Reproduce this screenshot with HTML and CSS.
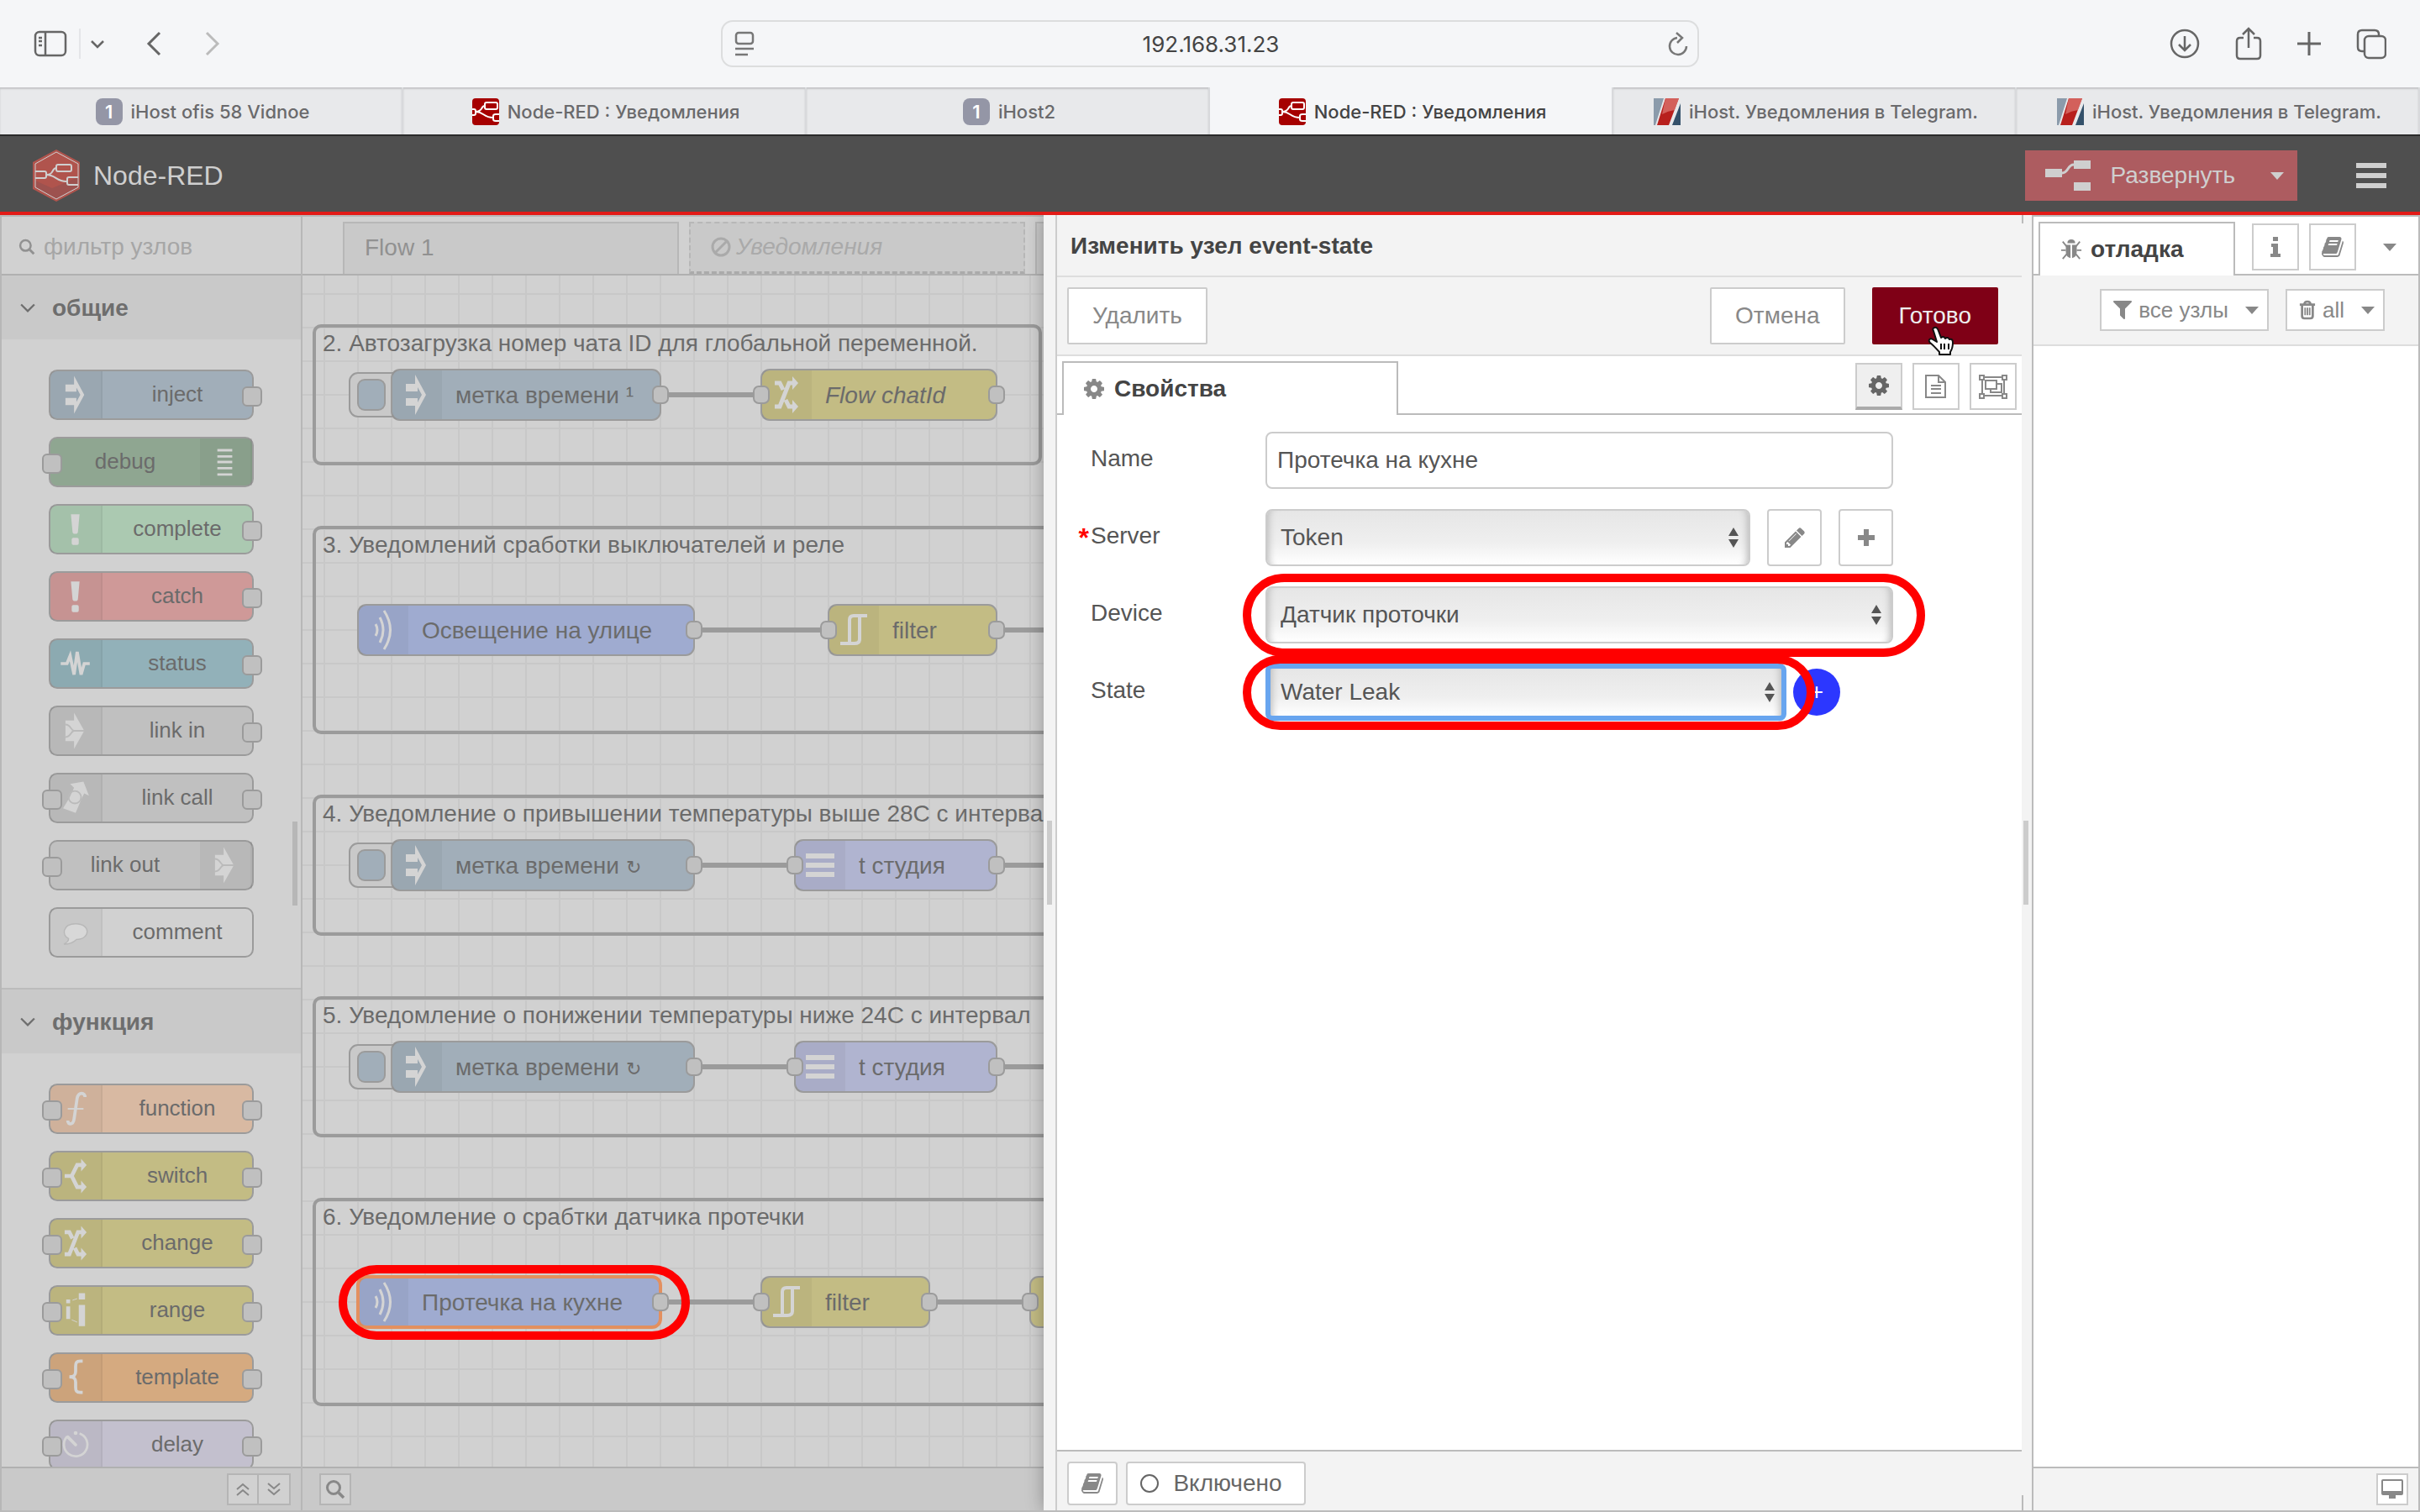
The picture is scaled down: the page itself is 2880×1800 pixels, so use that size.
FILE: index.html
```html
<!DOCTYPE html>
<html lang="ru">
<head>
  <meta charset="UTF-8">
  <meta name="viewport" content="width=device-width, initial-scale=1.0">
  <title>Node-RED : Уведомления</title>
  <link rel="stylesheet" href="styles.css">
</head>
<body>

  <!-- icons -->
  <svg class="sprite" width="0" height="0">
    <symbol id="inject" viewBox="0 0 60 60"><path fill="currentColor" d="M17 17h11V6l13 24-13 24V43H17V34h14v5l5-9-5-9v5H17z"/></symbol>
    <symbol id="debug" viewBox="0 0 60 60"><path stroke="currentColor" stroke-width="3" d="M20 15h19M20 23h19M20 30h19M20 38h19M20 46h19"/></symbol>
    <symbol id="alert" viewBox="0 0 60 60"><path fill="currentColor" d="M24 11h11l-2 22q0 3-3 3h-1q-3 0-3-3zM27 41h5q2 0 2 2v5q0 2-2 2h-5q-2 0-2-2v-5q0-2 2-2z"/></symbol>
    <symbol id="status" viewBox="0 0 60 60"><path fill="none" stroke="currentColor" stroke-width="4" d="M11 30h8l4-10 5 24 4-29 5 29 4-14h7"/></symbol>
    <symbol id="link" viewBox="0 0 60 60"><path fill="currentColor" d="M17 17h11V7l13 23-13 23V43H17z"/><path class="cut" d="M17 22c7 0 7 8 11 8-4 0-4 8-11 8M27 30h14"/></symbol>
    <symbol id="link-call" viewBox="0 0 60 60"><path fill="currentColor" d="M23 12l17-3 7 18-6-3-3 6-8 19-16-6 8-13 6-13z"/><circle class="cut" cx="29" cy="29" r="8"/></symbol>
    <symbol id="comment" viewBox="0 0 60 60"><path fill="#d8d8d8" stroke="#b8b8b8" stroke-width="1.500" d="M21 38c-9-4-8-19 9-19 20 0 19 20 1 20-3 3-9 6-16 6 4-2 6-4 6-7z"/></symbol>
    <symbol id="function" viewBox="0 0 60 60"><path fill="none" stroke="currentColor" stroke-width="4" d="M42 15c0-6-8-7-10 1l-4 27c-1 8-8 8-8 2"/><path stroke="currentColor" stroke-width="2" d="M20 30h20"/></symbol>
    <symbol id="switch" viewBox="0 0 60 60"><path fill="none" stroke="currentColor" stroke-width="5" d="M16 30h9l7-14h6M25 30l7 14h6"/><path fill="currentColor" d="M37 8l7 8-7 8zM37 36l7 8-7 8z"/></symbol>
    <symbol id="change" viewBox="0 0 60 60"><path fill="none" stroke="currentColor" stroke-width="5" d="M16 44h6l11-28h5M16 16h6l4 8M29 36l4 8h5"/><path fill="currentColor" d="M37 8l7 8-7 8zM37 36l7 8-7 8z"/></symbol>
    <symbol id="range" viewBox="0 0 60 60"><path fill="currentColor" d="M18 16h5v5h-5zM18 25h5v16h-5zM34 8h8v8h-8zM34 23h8v27h-8z"/><path stroke="currentColor" d="M26 17l6-2M25 42l7 3"/></symbol>
    <symbol id="template" viewBox="0 0 60 60"><path fill="none" stroke="currentColor" stroke-width="4" d="M39 9h-3c-5 0-6 2-6 7v6c0 5-2 7-8 7 6 0 8 2 8 7v6c0 5 1 7 6 7h3"/></symbol>
    <symbol id="delay" viewBox="0 0 60 60"><path fill="none" stroke="currentColor" stroke-width="3" d="M35 15.500a15 15 0 1 1-16 4"/><path stroke="currentColor" stroke-width="4" stroke-linecap="round" d="M20 20l10 10"/><circle cx="30" cy="15" r="2.500" fill="currentColor"/></symbol>
    <symbol id="event" viewBox="0 0 60 60"><path fill="none" stroke="currentColor" stroke-width="3" d="M21 23q4 7 0 14M26 15q8 15 0 30M31 7q15 23 0 46"/></symbol>
    <symbol id="rbe" viewBox="0 0 60 60"><path fill="none" stroke="currentColor" stroke-width="4" d="M46 13H30q-5 0-5 5v28M14 46h17q6 0 6-5V14"/></symbol>
    <symbol id="bars" viewBox="0 0 60 60"><path fill="currentColor" d="M13 16h34v6H13zM13 27h34v6H13zM13 38h34v6H13z"/></symbol>

    <symbol id="search" viewBox="0 0 24 24"><path fill="none" stroke="currentColor" stroke-width="3.500" d="M16 16l6 6"/><circle cx="10" cy="10" r="7.500" fill="none" stroke="currentColor" stroke-width="3"/></symbol>
    <symbol id="cog" viewBox="0 128 1536 1536"><path fill="currentColor" d="M1024 896q0-106-75-181t-181-75-181 75-75 181 75 181 181 75 181-75 75-181zm512-109v222q0 12-8 23t-20 13l-185 28q-19 54-39 91 35 50 107 138 10 12 10 25t-9 23q-27 37-99 108t-94 71q-12 0-26-9l-138-108q-44 23-91 38-16 136-29 186-7 28-36 28h-222q-14 0-24.500-8.500t-11.500-21.500l-28-184q-49-16-90-37l-141 107q-10 9-25 9-14 0-25-11-126-114-165-168-7-10-7-23 0-12 8-23 15-21 51-66.500t54-70.500q-27-50-41-99l-183-27q-13-2-21-12.500t-8-23.500v-222q0-12 8-23t19-13l186-28q14-46 39-92-40-57-107-138-10-12-10-24 0-10 9-23 26-36 98.500-107.500t94.500-71.500q13 0 26 10l138 107q44-23 91-38 16-136 29-186 7-28 36-28h222q14 0 24.500 8.500t11.500 21.500l28 184q49 16 90 37l142-107q9-9 24-9 13 0 25 10 129 119 165 170 7 8 7 22 0 12-8 23-15 21-51 66.500t-54 70.500q26 50 41 98l183 28q13 2 21 12.500t8 23.500z"/></symbol>
    <symbol id="book" viewBox="0 0 1792 1792"><path fill="currentColor" d="M1703 478q40 57 18 129l-275 906q-19 64-76.500 107.500t-122.500 43.500h-923q-77 0-148.500-53.500t-99.500-131.500q-24-67-2-127 0-4 3-27t4-37q1-8-3-21.500t-3-19.500q2-11 8-21t16.500-23.500 16.500-23.500q23-38 45-91.500t30-91.500q3-10 .5-30t-.5-28q3-11 17-28t17-23q21-36 42-92t25-90q1-9-2.500-32t.5-28q4-13 22-30.500t22-22.500q19-26 42.500-84.500t27.500-96.500q1-8-3-25.500t-2-26.500q2-8 9-18t18-23 17-21q8-12 16.500-30.500t15-35 16-36 19.500-32 26.500-23.500 36-11.500 47.500 5.500l-1 3q38-9 51-9h761q74 0 114 56t18 130l-274 906q-36 119-71.500 153.500t-128.500 34.500h-869q-27 0-38 15-11 16-1 43 24 70 144 70h923q29 0 56-15.500t35-41.500l300-987q7-22 5-57 38 15 59 43zm-1064 2q-4 13 2 22.500t20 9.500h608q13 0 25.500-9.500t16.500-22.500l21-64q4-13-2-22.500t-20-9.500h-608q-13 0-25.500 9.500t-16.500 22.500zm-83 256q-4 13 2 22.500t20 9.500h608q13 0 25.500-9.500t16.500-22.500l21-64q4-13-2-22.500t-20-9.500h-608q-13 0-25.500 9.500t-16.500 22.500z"/></symbol>
    <symbol id="caret" viewBox="0 0 16 16"><path fill="currentColor" d="M0 4h16l-8 9z"/></symbol>
    <symbol id="updown" viewBox="0 0 12 24"><path fill="currentColor" d="M6 0l6 10H0zM6 24l6-10H0z"/></symbol>
    <symbol id="chevron" viewBox="0 0 16 16"><path fill="none" stroke="currentColor" stroke-width="2" d="M1 4l7 7 7-7"/></symbol>
    <symbol id="nr" viewBox="0 0 32 32"><rect width="32" height="32" rx="4" fill="#a60000"/><g fill="none" stroke="#fff" stroke-width="2"><rect x="15" y="5" width="15" height="8" rx="2"/><path d="M0 13h2q2 0 2 2v3q0 2-2 2H0M4 16c9 0 6-7 11-7M4 16c10 0 9 7 21 7M32 19h-4q-3 0-3 2v4q0 2 3 2h4"/></g></symbol>
    <symbol id="telegram-doc" viewBox="0 0 32 32"><path fill="#8b9bab" d="M0 0h12L2 32H0z"/><path fill="#34516a" d="M32 6v26H22z"/><path fill="#b8201d" d="M14 0h16L18 32H4z"/><path fill="#d9706c" d="M14 0h16l-5 14q-8 1-15 5z" opacity=".8"/></symbol>
  </svg>

  <div class="app">
    <div class="browser-bar">
      <div class="nav-buttons">
        <button class="bar-button sidebar-toggle" aria-label="Боковая панель"><svg width="40" height="32" viewBox="0 0 40 32" fill="none" stroke="currentColor" stroke-width="2.500"><rect x="2" y="2" width="36" height="28" rx="5"/><path d="M14 2v28M6 9h4M6 13h4M6 18h4"/></svg></button>
        <span class="bar-line"></span>
        <button class="bar-button group-toggle" aria-label="Группы"><svg width="16" height="12" viewBox="0 0 16 12" fill="none" stroke="currentColor" stroke-width="2.500"><path d="M1 3l7 7 7-7"/></svg></button>
        <button class="bar-button back" aria-label="Назад"><svg width="18" height="30" viewBox="0 0 18 30" fill="none" stroke="currentColor" stroke-width="3"><path d="M16 2L3 15l13 13"/></svg></button>
        <button class="bar-button forward" aria-label="Вперёд" disabled><svg width="18" height="30" viewBox="0 0 18 30" fill="none" stroke="currentColor" stroke-width="3"><path d="M2 2l13 13L2 28"/></svg></button>
      </div>
      <div class="address">
        <svg width="24" height="30" viewBox="0 0 24 30" fill="none" stroke="currentColor" stroke-width="2.500"><rect x="2" y="2" width="20" height="13" rx="3"/><path d="M1 21h22M1 28h15"/></svg>
        <input type="text" value="192.168.31.23" aria-label="Адрес">
        <svg width="26" height="30" viewBox="0 0 26 30" fill="none" stroke="currentColor" stroke-width="2.500"><path d="M12 8a10 10 0 1 0 11 10M11 2l7 6-6 6"/></svg>
      </div>
      <div class="bar-actions">
        <button class="bar-button" aria-label="Загрузки"><svg width="36" height="40" viewBox="0 0 36 40" fill="none" stroke="currentColor" stroke-width="2.500"><circle cx="18" cy="20" r="16"/><path d="M18 11v17M11 21l7 7 7-7"/></svg></button>
        <button class="bar-button" aria-label="Поделиться"><svg width="32" height="40" viewBox="0 0 32 40" fill="none" stroke="currentColor" stroke-width="2.500"><path d="M10 13H6q-4 0-4 4v17q0 4 4 4h20q4 0 4-4V17q0-4-4-4h-4M16 25V3M9 9l7-7 7 7"/></svg></button>
        <button class="bar-button" aria-label="Новая вкладка"><svg width="28" height="40" viewBox="0 0 28 40" fill="none" stroke="currentColor" stroke-width="3"><path d="M14 6v28M0 20h28"/></svg></button>
        <button class="bar-button" aria-label="Все вкладки"><svg width="36" height="40" viewBox="0 0 36 40" fill="none" stroke="currentColor" stroke-width="2.500"><rect x="10" y="11" width="25" height="26" rx="5"/><path d="M9 29H7q-5 0-5-5V9q0-5 5-5h15q5 0 5 5v1"/></svg></button>
      </div>
    </div>

    <nav class="browser-tabs">
      <a class="browser-tab" href="#"><span class="badge">1</span>iHost ofis 58 Vidnoe</a>
      <a class="browser-tab" href="#"><svg class="favicon"><use href="#nr"/></svg>Node-RED : Уведомления</a>
      <a class="browser-tab" href="#"><span class="badge">1</span>iHost2</a>
      <a class="browser-tab active" href="#"><svg class="favicon"><use href="#nr"/></svg>Node-RED : Уведомления</a>
      <a class="browser-tab" href="#"><svg class="favicon"><use href="#telegram-doc"/></svg>iHost. Уведомления в Telegram.</a>
      <a class="browser-tab" href="#"><svg class="favicon"><use href="#telegram-doc"/></svg>iHost. Уведомления в Telegram.</a>
    </nav>

    <header class="header">
      <div class="logo">
        <svg width="56" height="62" viewBox="0 0 56 62"><path fill="#b0544d" d="M28 0l28 15v32L28 62 0 47V15z"/><path fill="#9d524f" d="M3 37l20 9 31-13v13L28 59 3 45z"/><path fill="none" stroke="#cfcfcf" d="M28 3l26 14v28L28 59 3 45V17z"/><g fill="none" stroke="#cfcfcf" stroke-width="2"><rect x="28" y="18" width="18" height="8" rx="2"/><path d="M3 26h11q2 0 2 2v4q0 2-2 2H3M16 30c10 0 6-8 12-8M16 30c11 0 12 8 24 8M54 33H43q-2 0-2 2v5q0 2 2 2h11"/></g></svg>
        <span>Node-RED</span>
      </div>
      <div class="header-actions">
        <button class="deploy">
          <svg width="56" height="36" viewBox="0 0 56 36"><path fill="currentColor" d="M0 10h20v10H0zM34 0h20v10H34zM34 26h20v10H34z"/><path fill="none" stroke="currentColor" stroke-width="3" d="M20 15c8 0 6-10 14-10"/></svg>
          Развернуть
          <svg class="caret"><use href="#caret"/></svg>
        </button>
        <button class="main-menu" aria-label="Меню"><svg width="36" height="30" viewBox="0 0 36 30"><path stroke="currentColor" stroke-width="6" d="M0 3h36M0 15h36M0 27h36"/></svg></button>
      </div>
    </header>

    <main class="main">
      <aside class="palette">
        <label class="palette-search">
          <svg class="search-icon"><use href="#search"/></svg>
          <input type="text" placeholder="фильтр узлов">
        </label>
        <div class="palette-list">
          <h3 class="category"><svg><use href="#chevron"/></svg>общие</h3>
          <div class="category-nodes">
            <div class="node out inject"><svg><use href="#inject"/></svg><span>inject</span></div>
            <div class="node in right debug"><svg><use href="#debug"/></svg><span>debug</span></div>
            <div class="node out complete"><svg><use href="#alert"/></svg><span>complete</span></div>
            <div class="node out catch"><svg><use href="#alert"/></svg><span>catch</span></div>
            <div class="node out status"><svg><use href="#status"/></svg><span>status</span></div>
            <div class="node out link"><svg><use href="#link"/></svg><span>link in</span></div>
            <div class="node in out link"><svg><use href="#link-call"/></svg><span>link call</span></div>
            <div class="node in right link"><svg><use href="#link"/></svg><span>link out</span></div>
            <div class="node comment"><svg><use href="#comment"/></svg><span>comment</span></div>
          </div>
          <h3 class="category"><svg><use href="#chevron"/></svg>функция</h3>
          <div class="category-nodes">
            <div class="node in out function"><svg><use href="#function"/></svg><span>function</span></div>
            <div class="node in out switch"><svg><use href="#switch"/></svg><span>switch</span></div>
            <div class="node in out switch"><svg><use href="#change"/></svg><span>change</span></div>
            <div class="node in out switch"><svg><use href="#range"/></svg><span>range</span></div>
            <div class="node in out template"><svg><use href="#template"/></svg><span>template</span></div>
            <div class="node in out delay"><svg><use href="#delay"/></svg><span>delay</span></div>
          </div>
          <span class="palette-grip"></span>
        </div>
        <div class="footer palette-footer">
          <button aria-label="Свернуть все"><svg width="18" height="18" viewBox="0 0 18 18" fill="none" stroke="currentColor" stroke-width="2"><path d="M2 9l7-6 7 6M2 16l7-6 7 6"/></svg></button>
          <button aria-label="Развернуть все"><svg width="18" height="18" viewBox="0 0 18 18" fill="none" stroke="currentColor" stroke-width="2"><path d="M2 2l7 6 7-6M2 9l7 6 7-6"/></svg></button>
        </div>
      </aside>

      <section class="workspace">
        <div class="flow-tabs">
          <a class="flow-tab" href="#">Flow 1</a>
          <a class="flow-tab disabled" href="#"><svg width="24" height="24" viewBox="0 0 24 24" fill="none" stroke="currentColor" stroke-width="3"><circle cx="12" cy="12" r="10"/><path d="M19 5L5 19"/></svg>Уведомления</a>
          <a class="flow-tab" href="#" aria-label="Flow"></a>
        </div>
        <svg class="canvas">
          <defs>
            <pattern id="grid" x="385" y="349" width="40" height="40" patternUnits="userSpaceOnUse"><path class="grid-line" d="M1 0v40M0 1h40"/></pattern>
          </defs>
          <!-- scrolled position of the flow -->
          <g transform="translate(-360 -328)">
            <rect x="360" y="328" width="4000" height="4000" fill="url(#grid)"/>

            <rect class="group" x="374" y="388" width="864" height="164" rx="8"/>
            <text class="group-label" x="384" y="418">2. Автозагрузка номер чата ID для глобальной переменной.</text>
            <path class="wire" d="M786 470h120"/>
            <rect class="button" x="416" y="444" width="80" height="52" rx="10"/>
            <rect class="shape inject" x="426" y="452" width="32" height="36" rx="8"/>
            <rect class="shape inject" x="466" y="440" width="320" height="60" rx="10"/>
            <path class="strip" d="M467 441h59v58h-59z"/>
            <use class="icon" href="#inject" x="466" y="440" width="60" height="60"/>
            <text x="542" y="480">метка времени ¹</text>
            <rect class="port" x="777" y="460" width="18" height="20" rx="6"/>
            <rect class="shape switch" x="906" y="440" width="280" height="60" rx="10"/>
            <path class="strip" d="M907 441h59v58h-59z"/>
            <use class="icon" href="#change" x="906" y="440" width="60" height="60"/>
            <text class="italic" x="982" y="480">Flow chatId</text>
            <rect class="port" x="897" y="460" width="18" height="20" rx="6"/>
            <rect class="port" x="1177" y="460" width="18" height="20" rx="6"/>

            <rect class="group" x="374" y="628" width="1400" height="244" rx="8"/>
            <text class="group-label" x="384" y="658">3. Уведомлений сработки выключателей и реле</text>
            <path class="wire" d="M826 750h160M1186 750h200"/>
            <rect class="shape event" x="426" y="720" width="400" height="60" rx="10"/>
            <path class="strip" d="M427 721h59v58h-59z"/>
            <use class="icon" href="#event" x="426" y="720" width="60" height="60"/>
            <text x="502" y="760">Освещение на улице</text>
            <rect class="port" x="817" y="740" width="18" height="20" rx="6"/>
            <rect class="shape switch" x="986" y="720" width="200" height="60" rx="10"/>
            <path class="strip" d="M987 721h59v58h-59z"/>
            <use class="icon" href="#rbe" x="986" y="720" width="60" height="60"/>
            <text x="1062" y="760">filter</text>
            <rect class="port" x="977" y="740" width="18" height="20" rx="6"/>
            <rect class="port" x="1177" y="740" width="18" height="20" rx="6"/>

            <rect class="group" x="374" y="948" width="1400" height="164" rx="8"/>
            <text class="group-label" x="384" y="978">4. Уведомление о привышении температуры выше 28С с интерва</text>
            <path class="wire" d="M826 1030h120M1186 1030h200"/>
            <rect class="button" x="416" y="1004" width="80" height="52" rx="10"/>
            <rect class="shape inject" x="426" y="1012" width="32" height="36" rx="8"/>
            <rect class="shape inject" x="466" y="1000" width="360" height="60" rx="10"/>
            <path class="strip" d="M467 1001h59v58h-59z"/>
            <use class="icon" href="#inject" x="466" y="1000" width="60" height="60"/>
            <text x="542" y="1040">метка времени <tspan class="repeat">↻</tspan></text>
            <rect class="port" x="817" y="1020" width="18" height="20" rx="6"/>
            <rect class="shape value" x="946" y="1000" width="240" height="60" rx="10"/>
            <path class="strip" d="M947 1001h59v58h-59z"/>
            <use class="icon" href="#bars" x="946" y="1000" width="60" height="60"/>
            <text x="1022" y="1040">t студия</text>
            <rect class="port" x="937" y="1020" width="18" height="20" rx="6"/>
            <rect class="port" x="1177" y="1020" width="18" height="20" rx="6"/>

            <rect class="group" x="374" y="1188" width="1400" height="164" rx="8"/>
            <text class="group-label" x="384" y="1218">5. Уведомление о понижении температуры ниже 24С с интервал</text>
            <path class="wire" d="M826 1270h120M1186 1270h200"/>
            <rect class="button" x="416" y="1244" width="80" height="52" rx="10"/>
            <rect class="shape inject" x="426" y="1252" width="32" height="36" rx="8"/>
            <rect class="shape inject" x="466" y="1240" width="360" height="60" rx="10"/>
            <path class="strip" d="M467 1241h59v58h-59z"/>
            <use class="icon" href="#inject" x="466" y="1240" width="60" height="60"/>
            <text x="542" y="1280">метка времени <tspan class="repeat">↻</tspan></text>
            <rect class="port" x="817" y="1260" width="18" height="20" rx="6"/>
            <rect class="shape value" x="946" y="1240" width="240" height="60" rx="10"/>
            <path class="strip" d="M947 1241h59v58h-59z"/>
            <use class="icon" href="#bars" x="946" y="1240" width="60" height="60"/>
            <text x="1022" y="1280">t студия</text>
            <rect class="port" x="937" y="1260" width="18" height="20" rx="6"/>
            <rect class="port" x="1177" y="1260" width="18" height="20" rx="6"/>

            <rect class="group" x="374" y="1428" width="1400" height="244" rx="8"/>
            <text class="group-label" x="384" y="1458">6. Уведомление о срабтки датчика протечки</text>
            <path class="wire" d="M786 1550h120M1106 1550h120"/>
            <rect class="shape event selected" x="426" y="1520" width="360" height="60" rx="10"/>
            <path class="strip" d="M428 1522h58v56h-58z"/>
            <use class="icon" href="#event" x="426" y="1520" width="60" height="60"/>
            <text x="502" y="1560">Протечка на кухне</text>
            <rect class="port" x="777" y="1540" width="18" height="20" rx="6"/>
            <rect class="shape switch" x="906" y="1520" width="200" height="60" rx="10"/>
            <path class="strip" d="M907 1521h59v58h-59z"/>
            <use class="icon" href="#rbe" x="906" y="1520" width="60" height="60"/>
            <text x="982" y="1560">filter</text>
            <rect class="port" x="897" y="1540" width="18" height="20" rx="6"/>
            <rect class="port" x="1097" y="1540" width="18" height="20" rx="6"/>
            <rect class="shape switch" x="1226" y="1520" width="200" height="60" rx="10"/>
            <rect class="port" x="1217" y="1540" width="18" height="20" rx="6"/>
            <rect class="highlight" x="408" y="1511" width="408" height="79" rx="40"/>
          </g>
        </svg>
        <div class="footer workspace-footer">
          <button aria-label="Поиск"><svg width="24" height="24"><use href="#search"/></svg></button>
        </div>
      </section>

      <section class="tray">
        <div class="tray-handle"><span class="grip"></span></div>
        <form class="tray-panel">
          <h2 class="tray-title">Изменить узел event-state</h2>
          <div class="tray-toolbar">
            <button type="button" class="btn">Удалить</button>
            <button type="button" class="btn cancel">Отмена</button>
            <button type="button" class="btn primary">Готово
              <svg class="cursor" width="32" height="36" viewBox="0 0 32 36"><path fill="#fff" stroke="#111" stroke-width="2" stroke-linejoin="round" d="M8 2c3-1 4 1 5 4l3 8c2-2 4-1 5 1 2-2 4-1 5 1 3-1 4 1 4 4 0 6-1 8-3 11v3H14v-3c-4-4-7-8-11-11-3-3 0-6 3-4l5 3L7 6c-1-2-1-3 1-4z"/><path stroke="#111" stroke-width="2" d="M16 21v7M20 21v7M25 21v7"/></svg>
            </button>
          </div>
          <div class="tray-tabs">
            <a class="tray-tab" href="#"><svg width="24" height="24"><use href="#cog"/></svg>Свойства</a>
            <div class="tab-buttons">
              <button type="button" class="selected" aria-label="Свойства"><svg width="24" height="24"><use href="#cog"/></svg></button>
              <button type="button" aria-label="Описание"><svg width="26" height="28" viewBox="0 0 26 28" fill="none" stroke="currentColor" stroke-width="2"><path d="M1 1h15l8 8v18H1zM16 1v8h8M7 13h12M7 17h12M7 22h12"/></svg></button>
              <button type="button" aria-label="Внешний вид"><svg width="34" height="30" viewBox="0 0 34 30" fill="none" stroke="currentColor" stroke-width="2"><path d="M4 4h26v22H4z"/><path d="M8 8h13v10H8zM21 12h6v10H14v-4"/><g fill="#fff"><path d="M1 2h5v5H1zM28 2h5v5h-5zM1 24h5v5H1zM28 24h5v5h-5z"/></g></svg></button>
            </div>
          </div>
          <div class="tray-body">
            <div class="row">
              <label for="name">Name</label>
              <input type="text" id="name" value="Протечка на кухне">
            </div>
            <div class="row">
              <label for="server" class="required">Server</label>
              <div class="select"><select id="server"><option>Token</option></select><svg><use href="#updown"/></svg></div>
              <button type="button" class="square" aria-label="Изменить"><svg width="28" height="28" viewBox="0 0 1792 1792"><path fill="currentColor" d="M491 1536l91-91-235-235-91 91v107h128v128h107zm523-928q0-22-22-22-10 0-17 7l-542 542q-7 7-7 17 0 22 22 22 10 0 17-7l542-542q7-7 7-17zm-54-192l416 416-832 832h-416v-416zm683 96q0 53-37 90l-166 166-416-416 166-165q36-38 90-38 53 0 91 38l235 234q37 39 37 91z"/></svg></button>
              <button type="button" class="square" aria-label="Добавить"><svg width="22" height="22" viewBox="0 0 22 22"><path stroke="currentColor" stroke-width="6" d="M11 1v20M1 11h20"/></svg></button>
            </div>
            <div class="row">
              <label for="device">Device</label>
              <div class="select marked device"><select id="device"><option>Датчик проточки</option></select><svg><use href="#updown"/></svg></div>
            </div>
            <div class="row state-row">
              <label for="state">State</label>
              <div class="select marked state"><select id="state"><option>Water Leak</option></select><svg><use href="#updown"/></svg></div>
              <button type="button" class="add-state">+</button>
            </div>
          </div>
          <div class="tray-footer">
            <button type="button" aria-label="Справка"><svg width="28" height="28"><use href="#book"/></svg></button>
            <button type="button" class="enabled"><svg width="24" height="24" viewBox="0 0 24 24"><circle cx="12" cy="12" r="10" fill="none" stroke="currentColor" stroke-width="2"/></svg>Включено</button>
          </div>
        </form>
      </section>

      <div class="separator"><span class="grip"></span></div>

      <aside class="sidebar">
        <div class="sidebar-tabs">
          <a class="sidebar-tab" href="#"><svg width="26" height="26" viewBox="0 0 28 28"><path fill="currentColor" d="M9 6q0-5 5-5t5 5zM7 8h6v17q-6-1-6-8zM15 8h6v9q0 7-6 8z"/><path fill="none" stroke="currentColor" stroke-width="2" d="M3 4l5 6M25 4l-5 6M1 15h6M27 15h-6M3 26l5-6M25 26l-5-6"/></svg>отладка</a>
          <div class="tab-buttons">
            <button aria-label="Информация"><svg width="12" height="24" viewBox="0 0 12 24"><path fill="currentColor" d="M3 0h6v5H3zM1 8h8v12h3v4H0v-4h3v-8H1z"/></svg></button>
            <button aria-label="Справка"><svg width="28" height="28"><use href="#book"/></svg></button>
            <button class="plain" aria-label="Ещё"><svg class="caret"><use href="#caret"/></svg></button>
          </div>
        </div>
        <div class="sidebar-toolbar">
          <button><svg width="22" height="22" viewBox="192 256 1408 1408"><path fill="currentColor" d="M1595 295q17 41-14 70l-493 493v742q0 42-39 59-13 5-25 5-27 0-45-19l-256-256q-19-19-19-45v-486l-493-493q-31-29-14-70 17-39 59-39h1280q42 0 59 39z"/></svg>все узлы<svg class="caret"><use href="#caret"/></svg></button>
          <button><svg width="20" height="24" viewBox="0 0 22 24" fill="none" stroke="currentColor" stroke-width="2"><path stroke-width="3" d="M1 5h20M7 5q0-4 4-4t4 4M4 6v14q0 3 3 3h8q3 0 3-3V6"/><path d="M8 9v10M11 9v10M14 9v10"/></svg>all<svg class="caret"><use href="#caret"/></svg></button>
        </div>
        <div class="sidebar-content"></div>
        <div class="footer sidebar-footer">
          <button aria-label="Открыть в окне"><svg width="26" height="24" viewBox="0 0 26 24"><path fill="currentColor" fill-rule="evenodd" d="M2 0h22q2 0 2 2v15q0 2-2 2h-7v4H9v-4H2q-2 0-2-2V2q0-2 2-2zM2 2v12h22V2z"/></svg></button>
        </div>
      </aside>
    </main>
  </div>

</body>
</html>
```
FILE: styles.css
```css
* {
  box-sizing: border-box;
}

body {
  margin: 0;
  font-family: "Helvetica Neue", "Liberation Sans", Arial, sans-serif;
  font-size: 28px;
  color: #555;
}

a {
  color: inherit;
  text-decoration: none;
}

button, input, select {
  font: inherit;
  color: inherit;
}

button {
  display: flex;
  align-items: center;
  justify-content: center;
  padding: 0;
  border: 2px solid #ccc;
  background: #fff;
  color: #888;
  cursor: pointer;
}

svg {
  flex: none;
  display: block;
}

.sprite {
  position: absolute;
}

.app {
  display: flex;
  flex-direction: column;
  height: 100vh;
  overflow: hidden;
}

.caret {
  width: 16px;
  height: 16px;
}

/* browser */
.browser-bar {
  flex: none;
  display: grid;
  grid-template-columns: 1fr minmax(600px, 1164px) 1fr;
  align-items: center;
  height: 104px;
  padding: 0 40px;
  background: #f5f6f8;
  color: #666;
  font-family: Inter, sans-serif;
}

.nav-buttons, .bar-actions {
  display: flex;
  align-items: center;
}

.bar-actions {
  justify-content: flex-end;
  gap: 42px;
}

.bar-button {
  border: none;
  background: none;
  color: #666;
}

.bar-line {
  width: 2px;
  height: 36px;
  margin: 0 12px 0 14px;
  background: #e4e5e8;
}

.back {
  margin-left: 50px;
}

.forward {
  margin-left: 52px;
  color: #bbb;
}

.address {
  display: flex;
  align-items: center;
  height: 56px;
  padding: 0 10px 0 14px;
  border: 2px solid #dcddde;
  border-radius: 14px;
  color: #777;
}

.address input {
  flex: 1;
  min-width: 0;
  border: none;
  background: none;
  text-align: center;
  font-size: 26px;
  color: #444;
}

.browser-tabs {
  flex: none;
  display: flex;
  height: 56px;
  background: #f5f6f8;
  font-family: Inter, sans-serif;
  font-size: 22px;
  font-weight: 500;
}

.browser-tab {
  flex: 1;
  display: flex;
  align-items: center;
  justify-content: center;
  gap: 10px;
  padding: 2px 0 0 4px;
  border-right: 2px solid #d8d9dc;
  background: #e8e9eb;
  box-shadow: inset 0 2px 2px #c4c5c8;
  color: #6a6a6c;
  white-space: nowrap;
}

.browser-tab.active {
  background: none;
  box-shadow: none;
  color: #444;
}

.favicon, .badge {
  width: 32px;
  height: 32px;
}

.badge {
  border-radius: 8px;
  background: #9496a6;
  color: #fff;
  text-align: center;
  line-height: 32px;
  font-weight: 600;
}

/* header */
.header {
  flex: none;
  display: flex;
  align-items: center;
  justify-content: space-between;
  height: 96px;
  padding: 4px 40px 0 39px;
  border-top: 2px solid #2b2b2b;
  border-bottom: 4px solid #e21b17;
  background: #4f4f4f;
  color: #cfcfcf;
}

.logo {
  display: flex;
  align-items: center;
  gap: 16px;
  font-size: 32px;
}

.header-actions {
  display: flex;
  align-items: center;
  gap: 70px;
}

.deploy {
  gap: 22px;
  height: 60px;
  padding: 0 16px 0 24px;
  border: none;
  background: #ad5c60;
  color: #cfcfcf;
}

.deploy .caret {
  margin-left: 20px;
}

.main-menu {
  border: none;
  background: none;
  color: #cfcfcf;
}

.main {
  flex: 1;
  display: flex;
  min-height: 0;
  border-bottom: 2px solid #bbb;
  background: #f3f3f3;
}

/* palette */
.palette {
  flex: none;
  display: flex;
  flex-direction: column;
  width: 360px;
  border: 2px solid #b7b7b7;
  border-bottom: none;
  background: #d1d1d1;
  color: #6e6e6e;
}

.palette-search {
  flex: none;
  display: flex;
  align-items: center;
  gap: 10px;
  height: 70px;
  padding: 4px 20px 0;
  border-bottom: 2px solid #b0b0b0;
  color: #919191;
}

.search-icon {
  width: 20px;
  height: 20px;
}

.palette-search input {
  min-width: 0;
  padding: 0;
  border: none;
  background: none;
}

.palette-search input::placeholder {
  color: #a6a6a6;
}

.palette-list {
  position: relative;
  flex: 1;
  overflow: hidden;
}

.palette-grip {
  position: absolute;
  right: 4px;
  top: 650px;
  width: 6px;
  height: 100px;
  background: #b7b7b7;
}

.category {
  display: flex;
  align-items: center;
  gap: 20px;
  height: 76px;
  margin: 0;
  padding: 2px 22px 0;
  background: #c9c9c9;
  font-size: 28px;
}

.category svg {
  width: 18px;
  height: 18px;
}

.category-nodes {
  display: flex;
  flex-direction: column;
  gap: 20px;
  padding: 36px 56px;
}

.category-nodes:not(:last-of-type) {
  border-bottom: 2px solid #bbb;
}

.node {
  position: relative;
  display: flex;
  height: 60px;
  border: 2px solid #9b9b9b;
  border-radius: 10px;
  color: #d4d4d4;
  font-size: 26px;
}

.node svg {
  width: 62px;
  height: 56px;
  background: rgba(0, 0, 0, 0.04);
  border-right: 2px solid rgba(0, 0, 0, 0.04);
}

.node span {
  flex: 1;
  line-height: 54px;
  text-align: center;
  color: #6b6b6b;
}

.node.right {
  flex-direction: row-reverse;
}

/* ports */
.node.in::before, .node.out::after {
  content: "";
  position: absolute;
  top: 18px;
  width: 20px;
  height: 20px;
  border: 2px solid #9b9b9b;
  border-radius: 6px;
  background: #c0c0c0;
}

.node.in::before {
  left: -10px;
}

.node.out::after {
  right: -12px;
}

.cut {
  fill: none;
  stroke: #bababa;
  stroke-width: 2px;
}

.inject { background: #a1aeb9; fill: #a1aeb9; }
.debug { background: #8fa691; }
.complete { background: #abc9b1; }
.catch { background: #cf9998; }
.status { background: #92b1b9; }
.link { background: #c0c0c0; }
.comment { background: #d1d1d1; }
.function { background: #d8b9a2; }
.switch { background: #c3bc84; fill: #c3bc84; }
.template { background: #d5aa80; }
.delay { background: #c3c0ce; }
.event { fill: #9fabd0; }
.value { fill: #b0b4d0; }

.footer {
  flex: none;
  display: flex;
  align-items: center;
  height: 52px;
  border-top: 2px solid #b0b0b0;
  background: #c9c9c9;
}

.footer button {
  width: 38px;
  height: 38px;
  border-color: #b5b5b5;
  background: #d1d1d1;
}

.palette-footer {
  justify-content: flex-end;
  padding-right: 12px;
}

.palette-footer button + button {
  margin-left: -2px;
  width: 40px;
}

/* workspace */
.workspace {
  flex: 1;
  display: flex;
  flex-direction: column;
  min-width: 0;
  overflow: hidden;
  border-top: 2px solid #b7b7b7;
  background: #d1d1d1;
}

.flow-tabs {
  flex: none;
  display: flex;
  align-items: flex-end;
  gap: 12px;
  height: 70px;
  padding-left: 48px;
  border-bottom: 2px solid #b0b0b0;
}

.flow-tab {
  flex: none;
  display: flex;
  align-items: center;
  gap: 6px;
  width: 400px;
  height: 62px;
  padding: 0 24px 2px;
  border: 2px solid #b7b7b7;
  border-bottom: none;
  background: #c9c9c9;
  color: #919191;
}

.flow-tab.disabled {
  border-style: dashed;
  color: #aaa;
  font-style: italic;
}

.canvas {
  flex: 1;
  width: 100%;
  min-height: 0;
}

.canvas text {
  font-size: 28px;
  fill: #6b6b6b;
}

.canvas .italic {
  font-style: italic;
}

.repeat {
  font-size: 22px;
}

.grid-line {
  stroke: #c8c8c8;
  stroke-width: 2px;
}

.group {
  fill: none;
  stroke: #9b9b9b;
  stroke-width: 4px;
}

.wire {
  fill: none;
  stroke: #9b9b9b;
  stroke-width: 6px;
}

.shape, .port, .button {
  stroke: #9b9b9b;
  stroke-width: 2px;
}

.button {
  fill: #c9c9c9;
}

.port {
  fill: #c0c0c0;
}

.shape.selected {
  stroke: #e3905f;
  stroke-width: 4px;
}

.strip {
  fill: rgba(0, 0, 0, 0.04);
}

.icon {
  color: #d4d4d4;
}

.highlight {
  fill: none;
  stroke: #f00;
  stroke-width: 10px;
}

.workspace-footer {
  padding-left: 20px;
}

/* edit tray */
.tray {
  flex: none;
  display: flex;
  width: 1164px;
  z-index: 1;
  box-shadow: 0 0 20px rgba(0, 0, 0, 0.3);
  clip-path: inset(0 0 0 -30px);
}

.tray-handle {
  display: flex;
  align-items: center;
  justify-content: center;
  width: 14px;
  background: #f3f3f3;
}

.grip {
  width: 6px;
  height: 100px;
  background: #ccc;
}

.tray-panel {
  flex: 1;
  display: flex;
  flex-direction: column;
  border-left: 2px solid #ccc;
  background: #fff;
}

.tray-title {
  flex: none;
  height: 74px;
  margin: 0;
  padding: 0 16px;
  border-bottom: 2px solid #ddd;
  background: #f3f3f3;
  font-size: 28px;
  line-height: 74px;
  color: #444;
}

.tray-toolbar {
  flex: none;
  display: flex;
  align-items: center;
  gap: 32px;
  height: 94px;
  padding: 0 28px 0 12px;
  border-bottom: 2px solid #ddd;
  background: #f3f3f3;
}

.btn {
  position: relative;
  height: 68px;
  padding: 0 28px;
  border-radius: 2px;
}

.cancel {
  margin-left: auto;
}

.btn.primary {
  padding: 0 30px;
  border-color: #7f0016;
  background: #7f0016;
  color: #eee;
}

.cursor {
  position: absolute;
  left: 64px;
  top: 44px;
}

.tray-tabs, .sidebar-tabs {
  flex: none;
  display: flex;
  align-items: flex-end;
  justify-content: space-between;
  height: 70px;
  padding: 0 6px;
  border-bottom: 2px solid #bbb;
}

.tray-tab, .sidebar-tab {
  display: flex;
  align-items: center;
  gap: 12px;
  width: 400px;
  height: 64px;
  margin-bottom: -2px;
  padding: 0 24px;
  border: 2px solid #bbb;
  border-bottom: none;
  background: #fff;
  font-weight: bold;
  color: #444;
}

.tray-tab svg, .sidebar-tab svg {
  color: #888;
}

.tab-buttons {
  display: flex;
  gap: 12px;
  margin-bottom: 4px;
}

.tab-buttons button {
  width: 56px;
  height: 56px;
}

.tab-buttons .selected {
  border-bottom: 4px solid #aaa;
  background: #efefef;
  color: #666;
}

.tab-buttons .plain {
  border-color: transparent;
  background: none;
}

.tray-body {
  flex: 1;
  display: flex;
  flex-direction: column;
  gap: 24px;
  padding: 20px 153px 20px 40px;
}

.row {
  display: flex;
  align-items: center;
  height: 68px;
}

.row label {
  position: relative;
  flex: none;
  width: 208px;
  padding-bottom: 4px;
}

.required::before {
  content: "*";
  position: absolute;
  right: 100%;
  padding-right: 2px;
  color: #f00;
  font-size: 32px;
  font-weight: bold;
}

.row input {
  flex: 1;
  min-width: 0;
  height: 68px;
  padding: 0 12px;
  border: 2px solid #ccc;
  border-radius: 8px;
}

.select {
  position: relative;
  flex: 1;
}

.select select {
  display: block;
  width: 100%;
  height: 68px;
  padding: 0 16px 2px;
  appearance: none;
  border: 2px solid #ccc;
  border-radius: 8px;
  background: linear-gradient(#e6e6e6, #efefef 60%, #fff);
  box-shadow: inset 10px 0 8px -8px #bbb, inset -10px 0 8px -8px #bbb;
}

.select svg {
  position: absolute;
  top: 22px;
  right: 14px;
  width: 12px;
  height: 24px;
}

.select.state {
  margin-right: 8px;
}

.state select {
  border: 6px solid #68a5ef;
  padding: 0 12px 2px;
}

/* red ovals */
.marked::after {
  content: "";
  position: absolute;
  z-index: 1;
  border: 10px solid #f00;
  border-radius: 50px;
  pointer-events: none;
}

.device::after {
  inset: -15px -38px -16px -27px;
}

.state::after {
  inset: -10px -34px -11px -27px;
}

.square {
  width: 65px;
  height: 68px;
  margin-left: 20px;
  border-radius: 4px;
}

.state-row {
  padding-right: 63px;
}

.add-state {
  width: 56px;
  height: 56px;
  border: none;
  border-radius: 50%;
  background: #2c37ff;
  color: #fff;
}

.tray-footer {
  flex: none;
  display: flex;
  align-items: center;
  gap: 10px;
  height: 72px;
  padding: 6px 12px 0;
  border-top: 2px solid #bbb;
  background: #f3f3f3;
}

.tray-footer button {
  width: 60px;
  height: 52px;
  border-radius: 4px;
}

.tray-footer .enabled {
  width: 214px;
  gap: 16px;
  padding-right: 12px;
  color: #666;
}

/* the ends of the workspace border show above and below the tray */
.separator {
  flex: none;
  display: flex;
  align-items: center;
  width: 12px;
  padding-left: 2px;
  background:
    linear-gradient(#bbb, #bbb) 0 0 / 2px 10px no-repeat,
    linear-gradient(#bbb, #bbb) 0 100% / 2px 18px no-repeat;
}

/* sidebar */
.sidebar {
  flex: none;
  display: flex;
  flex-direction: column;
  width: 462px;
  border: 2px solid #bbb;
  border-bottom: none;
  background: #fff;
}

.sidebar-tab {
  width: 234px;
  gap: 10px;
}

.sidebar-toolbar {
  flex: none;
  display: flex;
  align-items: center;
  justify-content: flex-end;
  gap: 20px;
  height: 84px;
  padding: 0 40px;
  border-bottom: 2px solid #ddd;
  background: #f3f3f3;
  font-size: 26px;
}

.sidebar-toolbar button {
  gap: 8px;
  height: 50px;
  padding: 0 10px 0 14px;
}

.sidebar-toolbar .caret {
  margin-left: 12px;
}

.sidebar-content {
  flex: 1;
}

.sidebar-footer {
  justify-content: flex-end;
  padding-right: 12px;
  border-top-color: #bbb;
  background: #f3f3f3;
}

.sidebar-footer button {
  border-color: #ccc;
  background: #fff;
}
```
